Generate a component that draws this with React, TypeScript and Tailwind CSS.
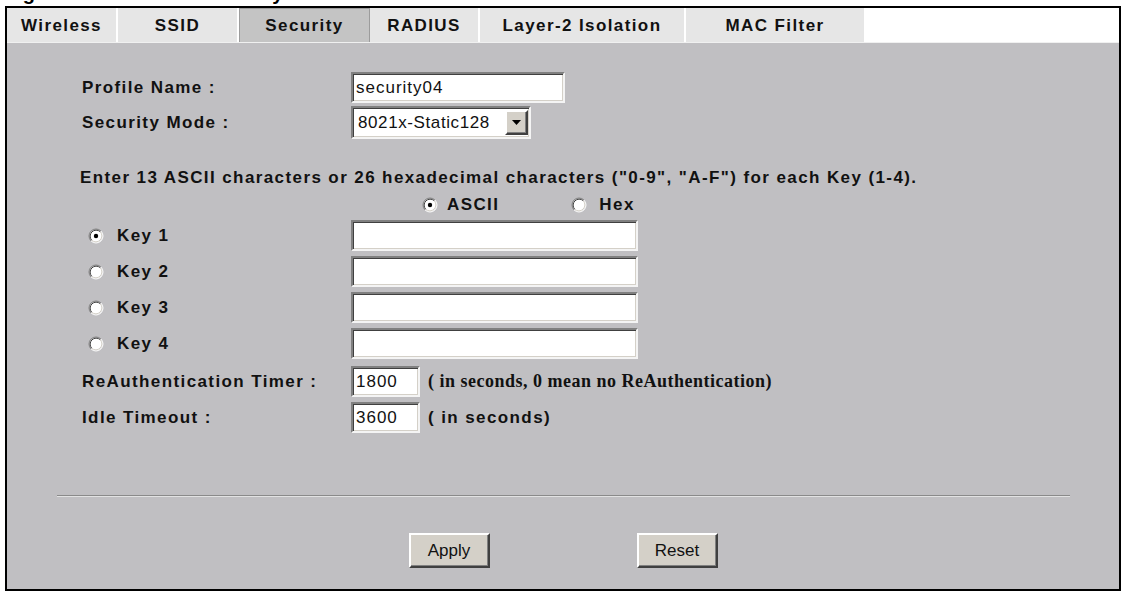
import React from 'react';

const sans = 'font-[family-name:Liberation_Sans,Arial,sans-serif]';
const serif = 'font-[family-name:Liberation_Serif,Times_New_Roman,serif]';
const label = `${sans} text-[17px] font-bold tracking-[1.4px] text-[#111]`;
const sunken =
  'border-2 border-t-[#808080] border-l-[#808080] border-r-[#f4f4f4] border-b-[#f4f4f4] shadow-[inset_1px_1px_0_#404040,inset_-1px_-1px_0_#d4d0c8] bg-white';
const raised =
  'border-2 border-t-white border-l-white border-r-[#404040] border-b-[#404040] shadow-[inset_-1px_-1px_0_#808080] bg-[#d4d0c8]';

function Radio({ checked }: { checked?: boolean }) {
  return (
    <svg width="16" height="16" viewBox="0 0 16 16" className="shrink-0">
      <circle cx="8" cy="8" r="6.5" fill="#fff" />
      <path d="M3.05 12.95A7 7 0 0 1 12.95 3.05" fill="none" stroke="#808080" strokeWidth="1" />
      <path d="M12.95 3.05A7 7 0 0 1 3.05 12.95" fill="none" stroke="#fff" strokeWidth="1" />
      <path d="M3.76 12.24A6 6 0 0 1 12.24 3.76" fill="none" stroke="#404040" strokeWidth="1" />
      <path d="M12.24 3.76A6 6 0 0 1 3.76 12.24" fill="none" stroke="#d4d0c8" strokeWidth="1" />
      {checked && <circle cx="8" cy="8" r="2.2" fill="#000" />}
    </svg>
  );
}

const tabs = [
  { name: 'Wireless', w: 'w-[111px]' },
  { name: 'SSID', w: 'w-[121px]' },
  { name: 'Security', w: 'w-[131px]', active: true },
  { name: 'RADIUS', w: 'w-[110px]' },
  { name: 'Layer-2 Isolation', w: 'w-[206px]' },
  { name: 'MAC Filter', w: 'w-[180px]' },
];

function TextBox({ value = '', className = '' }: { value?: string; className?: string }) {
  return (
    <div className={`${sunken} ${className} h-[31px] flex items-center pl-[3px] ${sans} text-[17px] tracking-[1px] text-[#111]`}>
      {value}
    </div>
  );
}

function KeyRow({ n, checked }: { n: number; checked?: boolean }) {
  return (
    <div className="flex items-center">
      <div className={`w-[269px] flex items-center pl-[6px] gap-[13px] ${label}`}>
        <Radio checked={checked} />
        <span>Key {n}</span>
      </div>
      <TextBox className="w-[287px]" />
    </div>
  );
}

export default function App() {
  return (
    <div className="w-[1126px] h-[593px] bg-white overflow-hidden">
      <div className="h-[6px] overflow-hidden">
        <div className={`-mt-[18px] leading-[22px] text-[20px] font-bold pl-[5px] ${sans} text-black`}>
          Figure 64 Wireless &gt; Security: 8021x-Static128
        </div>
      </div>
      <div className="mx-[5px] border-2 border-black h-[585px] flex flex-col">
        {/* tab strip */}
        <div className="flex h-[35px] bg-white border-b border-[#f0f0f0]">
          {tabs.map((t) => (
            <div
              key={t.name}
              className={`${t.w} flex items-center justify-center pt-[1px] ${label} ${
                t.active
                  ? 'bg-[#c4c4c4] border-x border-t border-[#9c9c9c]'
                  : 'bg-[#e6e6e6] border-r-2 border-white'
              }`}
            >
              {t.name}
            </div>
          ))}
        </div>

        {/* form body */}
        <div className="flex-1 bg-[#c0bfc2] pt-[29px] flex flex-col">
          <div className="pl-[75px] flex flex-col">
            <div className="flex items-center">
              <div className={`w-[269px] ${label}`}>Profile Name :</div>
              <TextBox value="security04" className="w-[214px]" />
            </div>
            <div className="flex items-center mt-[3px]">
              <div className={`w-[269px] ${label}`}>Security Mode :</div>
              <div className={`${sunken} w-[180px] h-[33px] flex items-center justify-between pl-[5px] pr-[1px]`}>
                <span className={`${sans} text-[17px] tracking-[0.6px] text-[#111]`}>8021x-Static128</span>
                <div className={`${raised} w-[23px] h-[25px] flex items-center justify-center`}>
                  <svg width="9" height="5" viewBox="0 0 9 5">
                    <path d="M0 0h9L4.5 5z" fill="#000" />
                  </svg>
                </div>
              </div>
            </div>

            <div className={`mt-[28px] -ml-[2px] leading-[21px] ${label}`}>
              Enter 13 ASCII characters or 26 hexadecimal characters ("0-9", "A-F") for each Key (1-4).
            </div>

            <div className="flex items-center h-[20px] mt-[7px] pl-[340px]">
              <Radio checked />
              <span className={`ml-[9px] ${label}`}>ASCII</span>
              <span className="ml-[72px]">
                <Radio />
              </span>
              <span className={`ml-[12px] ${label}`}>Hex</span>
            </div>

            <div className="flex flex-col gap-[5px] mt-[5px]">
              <KeyRow n={1} checked />
              <KeyRow n={2} />
              <KeyRow n={3} />
              <KeyRow n={4} />
            </div>

            <div className="flex items-center mt-[7px]">
              <div className={`w-[269px] ${label}`}>ReAuthentication Timer :</div>
              <TextBox value="1800" className="w-[69px]" />
              <span className={`ml-[8px] ${serif} text-[18px] font-bold tracking-[0.5px] text-[#111]`}>
                ( in seconds, 0 mean no ReAuthentication)
              </span>
            </div>
            <div className="flex items-center mt-[5px]">
              <div className={`w-[269px] ${label}`}>Idle Timeout :</div>
              <TextBox value="3600" className="w-[69px]" />
              <span className={`ml-[8px] ${label} tracking-[1.2px]`}>( in seconds)</span>
            </div>
          </div>

          <div className="mt-[62px] ml-[50px] mr-[49px] border-t border-t-[#8a8a8a] border-b border-b-[#e2e2e2]" />

          <div className="flex justify-center gap-[147px] mt-[36px]">
            <button className={`${raised} w-[81px] h-[35px] ${sans} text-[17px] text-[#111]`}>Apply</button>
            <button className={`${raised} w-[81px] h-[35px] ${sans} text-[17px] text-[#111]`}>Reset</button>
          </div>
        </div>
      </div>
    </div>
  );
}
